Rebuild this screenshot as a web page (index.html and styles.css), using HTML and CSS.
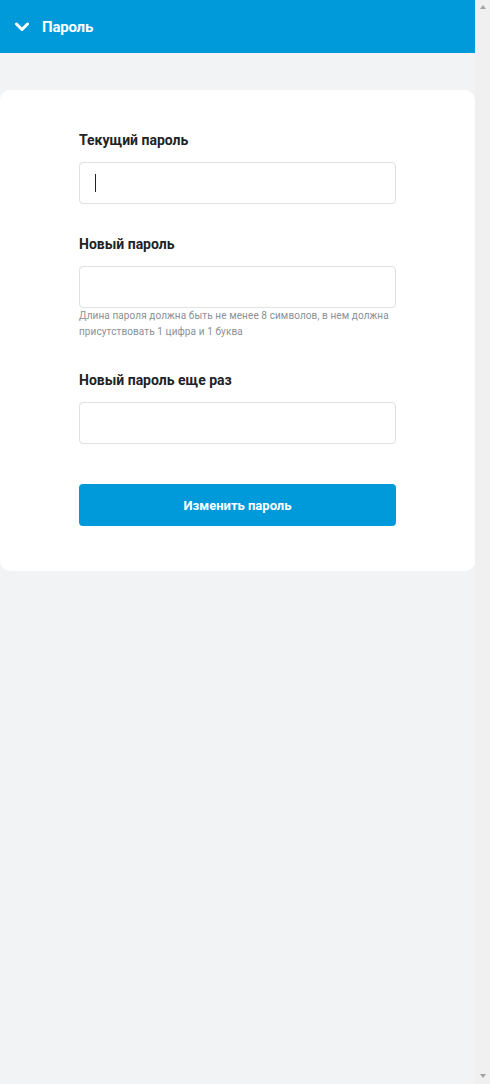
FILE: index.html
```html
<!DOCTYPE html>
<html lang="ru">
<head>
<meta charset="utf-8">
<title>Пароль</title>
<link rel="stylesheet" href="styles.css">
</head>
<body>
<div class="app">
  <div class="content">
    <header class="bar">
      <svg class="chev" width="14" height="10" viewBox="0 0 14 10" aria-hidden="true"><path d="M1.5 2 L7 7.5 L12.5 2" fill="none" stroke="#fff" stroke-width="3" stroke-linecap="round" stroke-linejoin="round"/></svg>
      <span class="bar-title">Пароль</span>
    </header>
    <main class="page">
      <section class="card">
        <form class="form">
          <div class="field">
            <label class="label">Текущий пароль</label>
            <div class="input-wrap">
              <input class="input" type="password">
              <span class="caret"></span>
            </div>
          </div>
          <div class="field">
            <label class="label">Новый пароль</label>
            <div class="input-wrap"><input class="input" type="password"></div>
            <p class="hint">Длина пароля должна быть не менее 8 символов, в нем должна присутствовать 1 цифра и 1 буква</p>
          </div>
          <div class="field">
            <label class="label">Новый пароль еще раз</label>
            <div class="input-wrap"><input class="input" type="password"></div>
          </div>
          <button class="btn" type="button">Изменить пароль</button>
        </form>
      </section>
    </main>
  </div>
  <div class="scrollbar" aria-hidden="true">
    <span class="sb-arrow sb-up"></span>
    <span class="sb-arrow sb-down"></span>
  </div>
</div>
</body>
</html>
```
FILE: styles.css
```css
html, body {
  margin: 0;
  height: 100%;
  background: #f2f3f5;
}
body {
  font-family: Roboto, "Noto Sans", sans-serif;
  color: #1f2023;
  overflow: hidden;
}
.app {
  display: flex;
  height: 100%;
}
.content {
  flex: 1;
  min-width: 0;
}
.scrollbar {
  width: 15px;
  flex: none;
  background: #f0f0f0;
  display: flex;
  flex-direction: column;
  justify-content: space-between;
  align-items: center;
  padding: 5px 0 6px;
  box-sizing: border-box;
}
.sb-arrow {
  width: 0;
  height: 0;
  border-left: 3.5px solid transparent;
  border-right: 3.5px solid transparent;
}
.sb-up { border-bottom: 4px solid #a3a3a3; }
.sb-down { border-top: 4px solid #a3a3a3; }
.bar {
  height: 53px;
  background: #009ada;
  display: flex;
  align-items: center;
  padding-left: 15px;
  gap: 13px;
}
.chev { display: block; margin-top: 1px; }
.bar-title {
  color: #fff;
  font-weight: 700;
  font-size: 15px;
  letter-spacing: -0.2px;
}
.page {
  padding-top: 37px;
}
.card {
  background: #fff;
  border-radius: 10px;
  padding: 40px 79px 45px;
}
.form { display: flex; flex-direction: column; }
.field { margin-bottom: 30px; }
.label {
  display: block;
  font-size: 14px;
  line-height: 20px;
  font-weight: 700;
  color: #222326;
  margin-bottom: 12px;
}
.input-wrap { position: relative; }
.input {
  display: block;
  box-sizing: border-box;
  width: 100%;
  height: 42px;
  border: 1px solid #dfe1e4;
  border-radius: 4px;
  background: #fff;
  outline: none;
  padding: 0 15px;
  font: inherit;
}
.caret {
  position: absolute;
  left: 16px;
  top: 12px;
  width: 1px;
  height: 18px;
  background: #222;
}
.hint {
  margin: 0;
  font-size: 10px;
  line-height: 16px;
  letter-spacing: 0.1px;
  color: #8b9099;
}
.btn {
  margin-top: 10px;
  height: 42px;
  border: none;
  border-radius: 4px;
  background: #009ada;
  color: #fff;
  font: inherit;
  font-size: 13px;
  font-weight: 700;
}
```
